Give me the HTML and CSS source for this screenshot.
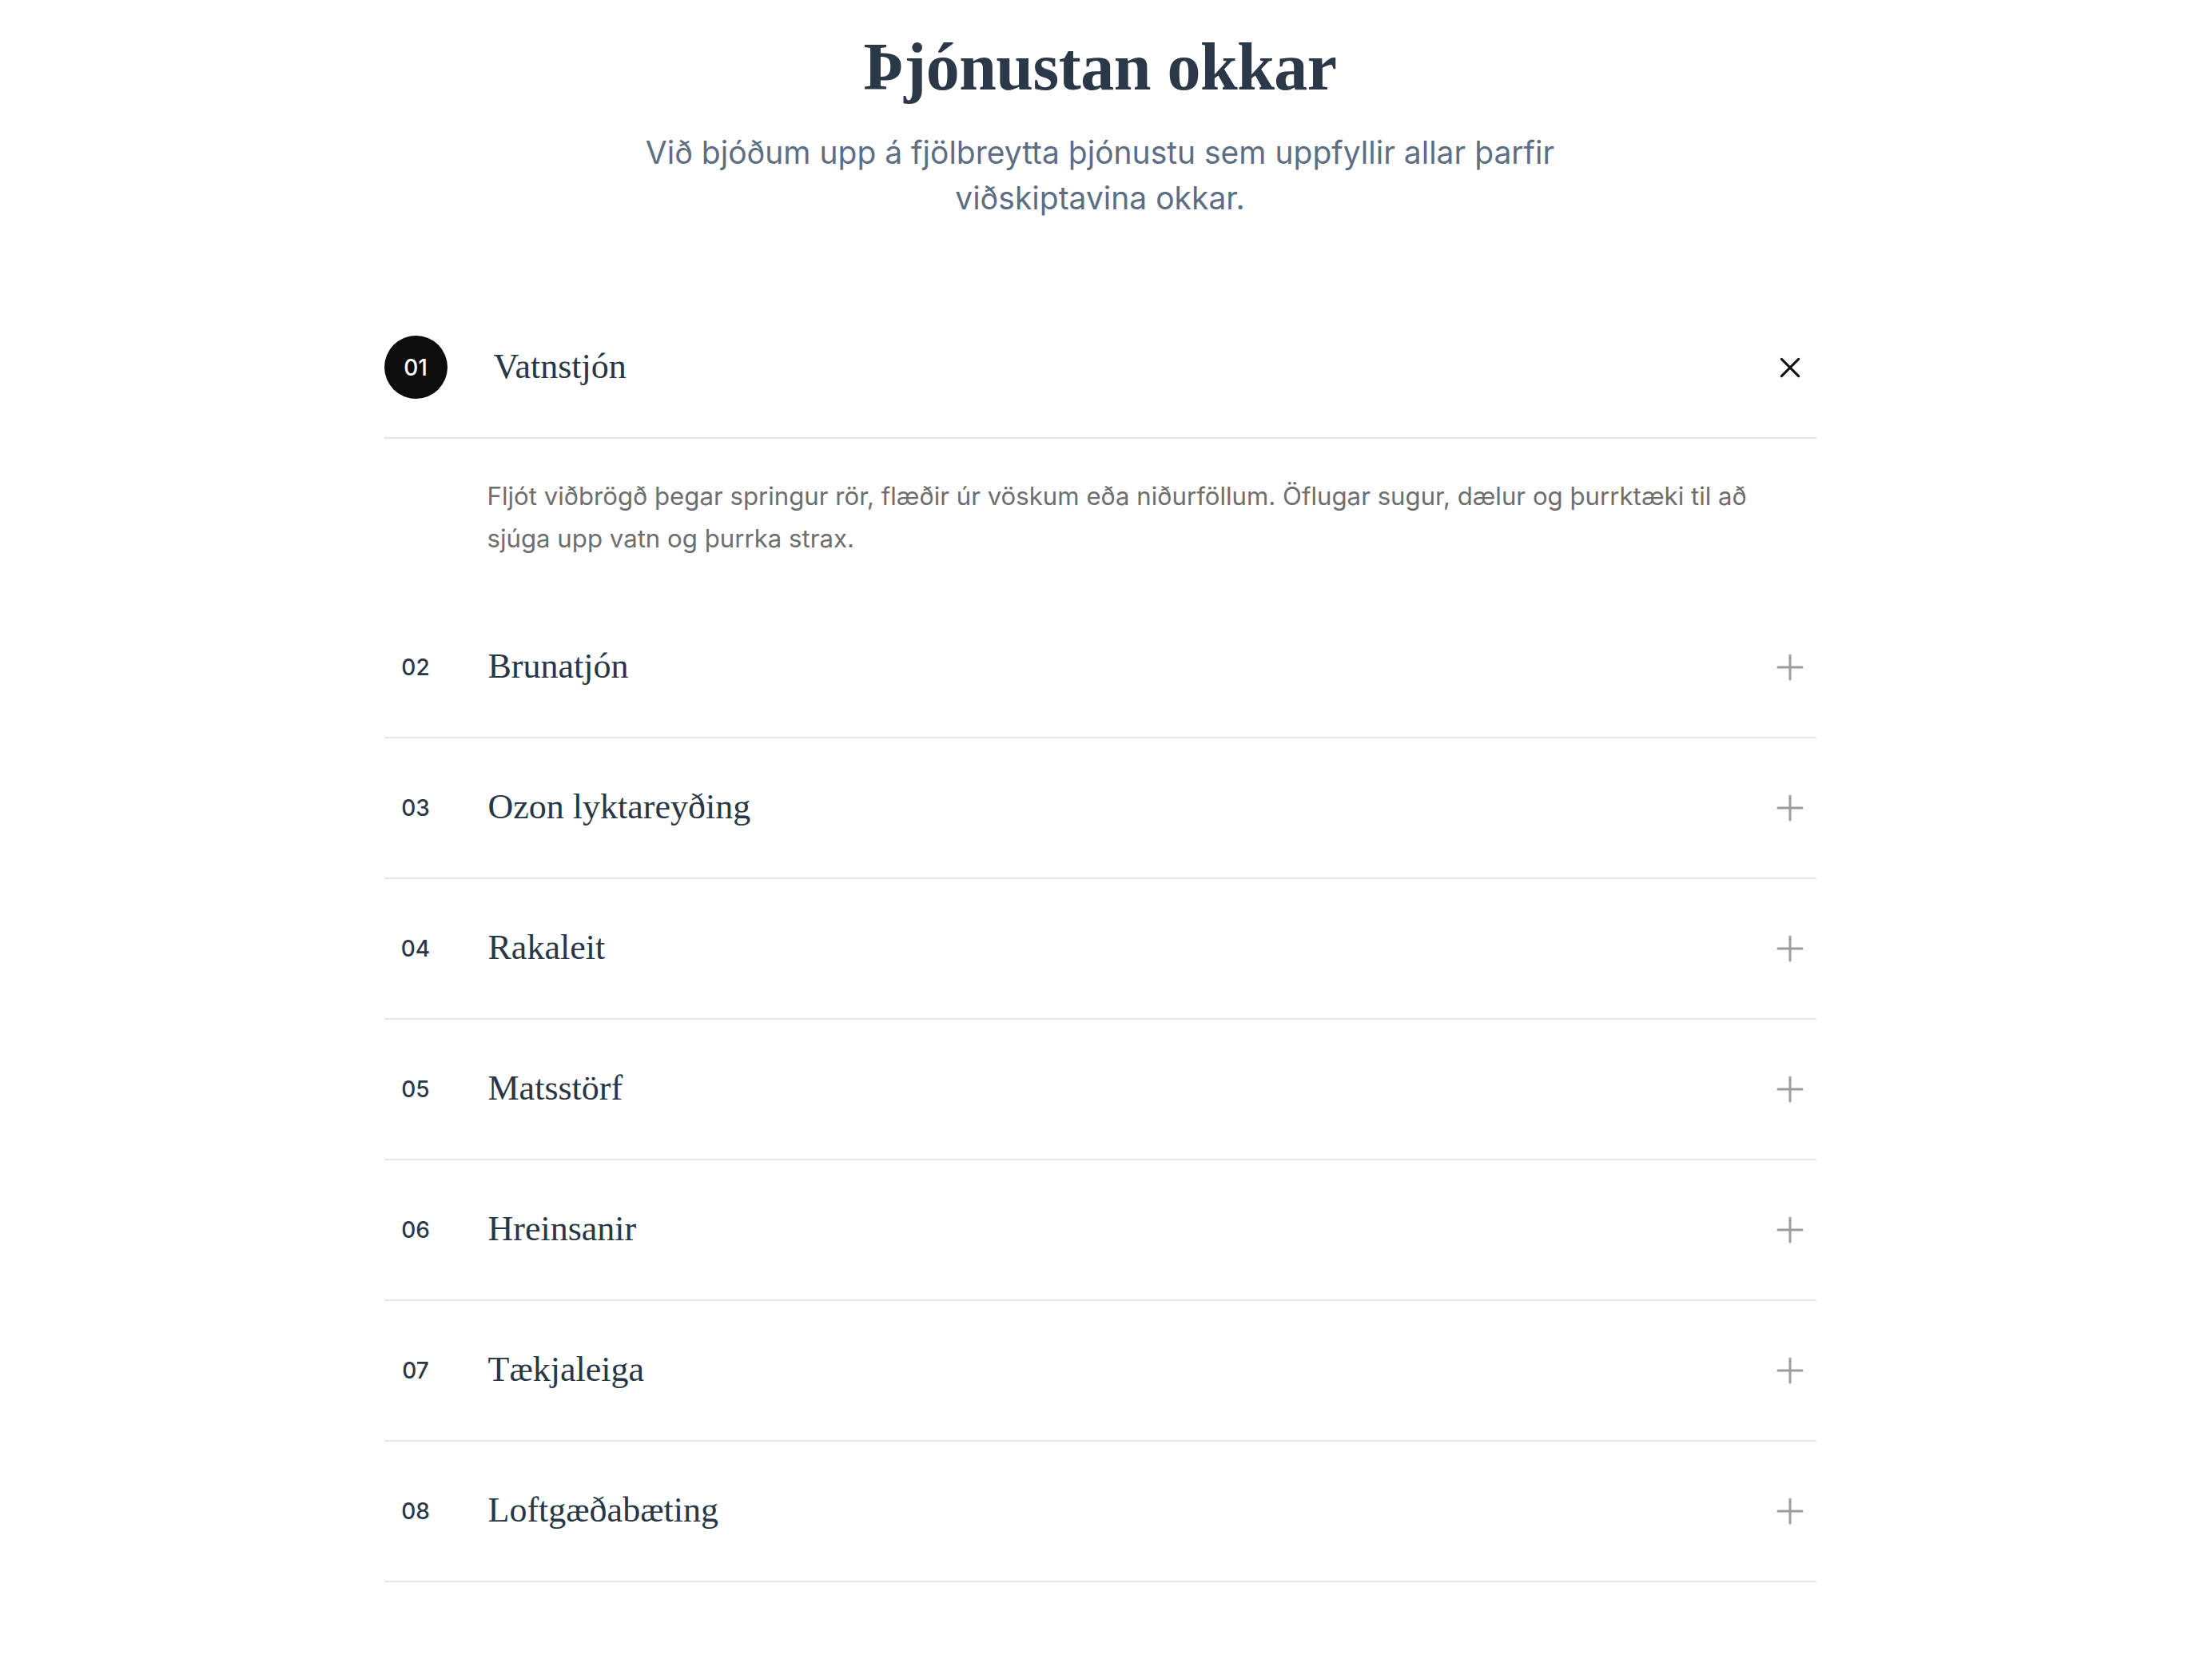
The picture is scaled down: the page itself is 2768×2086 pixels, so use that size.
FILE: index.html
```html
<!DOCTYPE html>
<html lang="is">
<head>
<meta charset="utf-8">
<title>Þjónustan okkar</title>
<link rel="stylesheet" href="styles.css">
</head>
<body>
<main class="page">
  <header class="intro">
    <h1 class="title">Þjónustan okkar</h1>
    <p class="lead">Við bjóðum upp á fjölbreytta þjónustu sem uppfyllir allar þarfir viðskiptavina okkar.</p>
  </header>

  <section class="acc">
    <div class="item open">
      <button class="head" type="button">
        <span class="num">01</span>
        <span class="name">Vatnstjón</span>
        <svg class="ico" viewBox="0 0 42 42"><path d="M21 6v30M6 21h30"/></svg>
      </button>
      <div class="body">
        <p>Fljót viðbrögð þegar springur rör, flæðir úr vöskum eða niðurföllum. Öflugar sugur, dælur og þurrktæki til að sjúga upp vatn og þurrka strax.</p>
      </div>
    </div>
    <div class="item">
      <button class="head" type="button">
        <span class="num">02</span>
        <span class="name">Brunatjón</span>
        <svg class="ico" viewBox="0 0 42 42"><path d="M21 6v30M6 21h30"/></svg>
      </button>
    </div>
    <div class="item">
      <button class="head" type="button">
        <span class="num">03</span>
        <span class="name">Ozon lyktareyðing</span>
        <svg class="ico" viewBox="0 0 42 42"><path d="M21 6v30M6 21h30"/></svg>
      </button>
    </div>
    <div class="item">
      <button class="head" type="button">
        <span class="num">04</span>
        <span class="name">Rakaleit</span>
        <svg class="ico" viewBox="0 0 42 42"><path d="M21 6v30M6 21h30"/></svg>
      </button>
    </div>
    <div class="item">
      <button class="head" type="button">
        <span class="num">05</span>
        <span class="name">Matsstörf</span>
        <svg class="ico" viewBox="0 0 42 42"><path d="M21 6v30M6 21h30"/></svg>
      </button>
    </div>
    <div class="item">
      <button class="head" type="button">
        <span class="num">06</span>
        <span class="name">Hreinsanir</span>
        <svg class="ico" viewBox="0 0 42 42"><path d="M21 6v30M6 21h30"/></svg>
      </button>
    </div>
    <div class="item">
      <button class="head" type="button">
        <span class="num">07</span>
        <span class="name">Tækjaleiga</span>
        <svg class="ico" viewBox="0 0 42 42"><path d="M21 6v30M6 21h30"/></svg>
      </button>
    </div>
    <div class="item">
      <button class="head" type="button">
        <span class="num">08</span>
        <span class="name">Loftgæðabæting</span>
        <svg class="ico" viewBox="0 0 42 42"><path d="M21 6v30M6 21h30"/></svg>
      </button>
    </div>
  </section>
</main>
</body>
</html>
```

FILE: styles.css
```css
html {
  overflow: hidden;
}

body {
  margin: 0;
  padding: 0 15px 0 0;
  background: #ffffff;
  font-family: Inter, "Noto Sans", sans-serif;
  color: #2b3847;
}

.page {
  max-width: 1792px;
  margin: 0 auto;
  padding: 34px 0 80px;
}

.intro {
  display: flex;
  flex-direction: column;
  align-items: center;
  text-align: center;
}

.title {
  margin: 0;
  font-family: "Liberation Serif", "Times New Roman", serif;
  font-weight: 700;
  font-size: 84px;
  line-height: 1.2;
  color: #2a3848;
  letter-spacing: -0.5px;
}

.lead {
  margin: 27px 0 0;
  max-width: 1190px;
  font-size: 39px;
  line-height: 57px;
  color: #5d6e83;
}

.acc {
  margin-top: 97px;
}

.head {
  display: flex;
  align-items: center;
  width: 100%;
  height: 176px;
  box-sizing: border-box;
  padding: 0 12px 0 0;
  margin: 0;
  background: none;
  border: 0;
  border-bottom: 2px solid #e6e6e6;
  font: inherit;
  color: inherit;
  text-align: left;
  cursor: pointer;
}

.num {
  flex: 0 0 79px;
  width: 79px;
  height: 79px;
  border-radius: 50%;
  display: flex;
  align-items: center;
  justify-content: center;
  font-family: Inter, sans-serif;
  font-weight: 500;
  font-size: 28px;
  color: #2b3847;
}

.name {
  flex: 1;
  margin-left: 51px;
  font-family: "Liberation Serif", "Times New Roman", serif;
  font-size: 44px;
  line-height: 1.2;
  color: #283646;
}

.ico {
  flex: 0 0 42px;
  width: 42px;
  height: 42px;
  fill: none;
  stroke: #9b9b9b;
  stroke-width: 3;
  stroke-linecap: round;
}

.open .num {
  background: #0c0c0c;
  color: #ffffff;
}

.open .name {
  transform: translateX(7px);
}

.open .ico {
  stroke: #111111;
  transform: rotate(45deg);
}

.body {
  padding: 46px 60px 47px 129px;
}

.body p {
  margin: 0;
  font-size: 31.2px;
  line-height: 53px;
  color: #6e6e6e;
}
```
